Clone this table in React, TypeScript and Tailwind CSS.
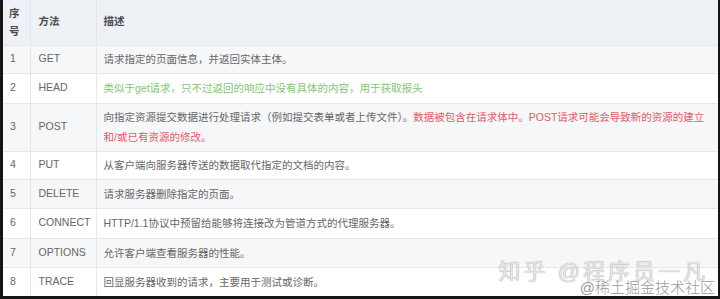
const rows: { no: string; method: string; desc: React.ReactNode; h: string }[] = [
  { no: '1', method: 'GET', desc: '请求指定的页面信息，并返回实体主体。', h: 'h-[28px]' },
  {
    no: '2',
    method: 'HEAD',
    desc: <span className="text-[#84c674]">类似于get请求，只不过返回的响应中没有具体的内容，用于获取报头</span>,
    h: 'h-[30px]',
  },
  {
    no: '3',
    method: 'POST',
    desc: (
      <>
        向指定资源提交数据进行处理请求（例如提交表单或者上传文件）。
        <span className="text-[#e25a66]">数据被包含在请求体中。POST请求可能会导致新的资源的建立和/或已有资源的修改。</span>
      </>
    ),
    h: 'h-[48px]',
  },
  { no: '4', method: 'PUT', desc: '从客户端向服务器传送的数据取代指定的文档的内容。', h: 'h-[28px]' },
  { no: '5', method: 'DELETE', desc: '请求服务器删除指定的页面。', h: 'h-[29px]' },
  { no: '6', method: 'CONNECT', desc: 'HTTP/1.1协议中预留给能够将连接改为管道方式的代理服务器。', h: 'h-[30px]' },
  { no: '7', method: 'OPTIONS', desc: '允许客户端查看服务器的性能。', h: 'h-[29px]' },
  { no: '8', method: 'TRACE', desc: '回显服务器收到的请求，主要用于测试或诊断。', h: 'h-[29px]' },
];

export default function App() {
  return (
    <div className="w-[720px] h-[299px] bg-[#151515] pl-[3px] pr-[2px] pb-[3px] overflow-hidden">
      <div className="relative w-full h-full bg-white font-['Liberation_Sans','Noto_Sans_CJK_SC',sans-serif] text-[10.5px] text-[#666]">
        <table className="w-full border-collapse table-fixed">
          <colgroup>
            <col className="w-[27px]" />
            <col className="w-[66px]" />
            <col />
          </colgroup>
          <thead>
            <tr className="h-[45px] bg-[#eef1f5] text-[#4a4a4a]">
              <th className="px-[6px] text-left leading-[18px] border-r border-[#e2e5e9] font-bold">序号</th>
              <th className="px-[8px] text-left border-r border-[#e2e5e9] font-bold">方法</th>
              <th className="px-[7px] text-left font-bold">描述</th>
            </tr>
          </thead>
          <tbody>
            {rows.map((r, i) => (
              <tr
                key={r.no}
                className={`${r.h} border-t border-[#e4e7eb] ${i % 2 === 0 ? 'bg-[#f6f7f9]' : 'bg-white'}`}
              >
                <td className="px-[7px] border-r border-[#e4e7eb]">{r.no}</td>
                <td className="px-[8px] border-r border-[#e4e7eb] whitespace-nowrap">{r.method}</td>
                <td className="pl-[7px] pr-[2px] leading-[20px]">{r.desc}</td>
              </tr>
            ))}
          </tbody>
        </table>

        {/* watermark */}
        <div className="absolute right-[10px] bottom-[13px] text-[22px] leading-none text-[#e6e6e6] tracking-[3px] [text-shadow:0_0_1px_#8a8a8a]">
          知乎 @程序员一凡
        </div>
        <div className="absolute right-[3px] bottom-[1px] text-[15px] leading-none text-[#9a9a9a] font-light">
          @稀土掘金技术社区
        </div>
      </div>
    </div>
  );
}
